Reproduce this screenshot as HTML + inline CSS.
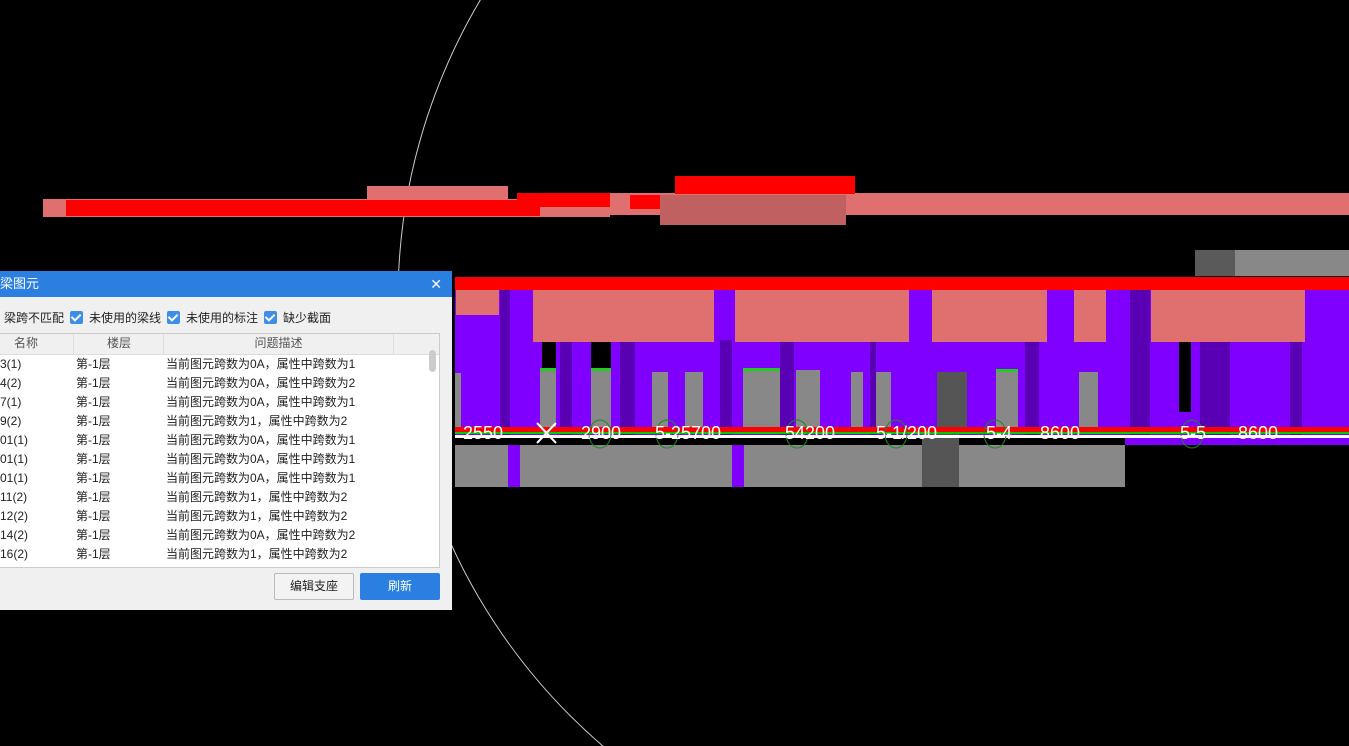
<!DOCTYPE html><html><head><meta charset="utf-8"><style>
html,body{margin:0;width:1349px;height:746px;overflow:hidden}
body{background:#000;position:relative;font-family:"Liberation Sans","Noto Sans CJK SC",sans-serif}
.r{position:absolute}
.dlg{position:absolute;left:0;top:271px;width:452px;height:339px;background:#f0f0f0;font-size:12px;color:#222}
.tb{height:26px;background:#2b7fe0;color:#fff;font-size:13px;line-height:26px}
.cb{display:inline-block;width:13px;height:13px;background:#3d8ee8;border-radius:2px;vertical-align:-2px;margin:0 6px 0 6px;position:relative}
.cb:after{content:"";position:absolute;left:3px;top:1px;width:4px;height:7px;border:solid #fff;border-width:0 2px 2px 0;transform:rotate(45deg)}
.tbl{position:absolute;left:0;top:62px;width:439px;height:233px;background:#fff;border:1px solid #ccc;border-left:none;overflow:hidden}
.row{height:19px;line-height:19px;position:relative}
.row span{position:absolute}
.btn{position:absolute;top:302px;height:25px;line-height:25px;text-align:center;border-radius:2px;font-size:12px}
.lb{position:absolute;top:423px;color:#fff;font-size:18px}
</style></head><body>
<svg class="r" style="left:0;top:0" width="1349" height="746"><circle cx="986" cy="300" r="588" fill="none" stroke="#ccc" stroke-width="1"/></svg>
<!-- upper band -->
<div class="r" style="left:43px;top:199px;width:500px;height:18px;background:#e07070"></div>
<div class="r" style="left:66px;top:200px;width:474px;height:16px;background:#f00"></div>
<div class="r" style="left:367px;top:186px;width:141px;height:14px;background:#e07070"></div>
<div class="r" style="left:517px;top:193px;width:95px;height:14px;background:#f00"></div>
<div class="r" style="left:540px;top:207px;width:70px;height:10px;background:#e07070"></div>
<div class="r" style="left:610px;top:193px;width:739px;height:22px;background:#e07070"></div>
<div class="r" style="left:630px;top:195px;width:30px;height:14px;background:#f00"></div>
<div class="r" style="left:675px;top:176px;width:180px;height:18px;background:#f00"></div>
<div class="r" style="left:660px;top:195px;width:186px;height:30px;background:#c06060"></div>
<!-- gray top right -->
<div class="r" style="left:1195px;top:250px;width:154px;height:26px;background:#888"></div>
<div class="r" style="left:1195px;top:250px;width:40px;height:26px;background:#5a5a5a"></div>
<!-- lower structure -->
<svg class="r" style="left:0;top:0" width="1349" height="746">
<rect x="455" y="277" width="894" height="14" fill="#f00"/>
<rect x="455" y="290" width="894" height="147" fill="#8000ff"/>
<g fill="#5a00b4"><rect x="500" y="290" width="10" height="147"/><rect x="560" y="340" width="12" height="97"/><rect x="620" y="340" width="15" height="97"/><rect x="720" y="340" width="12" height="97"/><rect x="780" y="340" width="14" height="97"/><rect x="870" y="340" width="6" height="97"/><rect x="1025" y="340" width="14" height="97"/><rect x="1130" y="290" width="20" height="147"/><rect x="1200" y="340" width="30" height="97"/><rect x="1290" y="340" width="12" height="97"/></g>
<g fill="#e07070"><rect x="456" y="290" width="43" height="25"/><rect x="533" y="290" width="181" height="52"/><rect x="735" y="290" width="174" height="52"/><rect x="932" y="290" width="115" height="52"/><rect x="1074" y="290" width="32" height="52"/><rect x="1151" y="290" width="154" height="52"/></g>
<g fill="#000"><rect x="542" y="342" width="14" height="28"/><rect x="591" y="342" width="20" height="28"/><rect x="1179" y="342" width="12" height="70"/></g>
<g fill="#888"><rect x="455" y="373" width="6" height="60"/><rect x="540" y="370" width="16" height="63"/><rect x="591" y="370" width="20" height="63"/><rect x="652" y="372" width="16" height="61"/><rect x="685" y="372" width="18" height="61"/><rect x="743" y="370" width="37" height="63"/><rect x="796" y="370" width="24" height="63"/><rect x="851" y="372" width="12" height="61"/><rect x="876" y="372" width="15" height="61"/><rect x="996" y="372" width="22" height="61"/><rect x="1079" y="372" width="19" height="61"/></g>
<rect x="937" y="372" width="30" height="61" fill="#555"/>
<g fill="#22cc22"><rect x="540" y="368" width="16" height="3"/><rect x="591" y="368" width="20" height="3"/><rect x="743" y="368" width="37" height="3"/><rect x="996" y="369" width="22" height="3"/></g>
<rect x="455" y="445" width="670" height="42" fill="#888"/>
<rect x="508" y="445" width="12" height="42" fill="#8000ff"/>
<rect x="732" y="445" width="12" height="42" fill="#8000ff"/>
<rect x="922" y="433" width="37" height="54" fill="#555"/>
<rect x="1125" y="437" width="224" height="8" fill="#8000ff"/>
<rect x="455" y="427" width="894" height="5" fill="#f00"/>
<rect x="455" y="432" width="894" height="2" fill="#0c0"/>
<rect x="455" y="435" width="894" height="3" fill="#fff"/>
<g fill="none" stroke="#1a8a1a" stroke-width="1"><ellipse cx="600" cy="434" rx="11" ry="14"/><ellipse cx="667" cy="434" rx="11" ry="14"/><ellipse cx="797" cy="434" rx="11" ry="14"/><ellipse cx="896" cy="434" rx="11" ry="14"/><ellipse cx="995" cy="434" rx="11" ry="14"/><ellipse cx="1192" cy="434" rx="11" ry="14"/></g>
<path d="M537 423 L556 443 M556 423 L537 443" stroke="#fff" stroke-width="2"/>
</svg>
<span class="lb" style="left:463px">2550</span>
<span class="lb" style="left:581px">2900</span>
<span class="lb" style="left:655px">5-25700</span>
<span class="lb" style="left:785px">54200</span>
<span class="lb" style="left:876px">5-1/200</span>
<span class="lb" style="left:986px">5-4</span>
<span class="lb" style="left:1040px">8600</span>
<span class="lb" style="left:1180px">5-5</span>
<span class="lb" style="left:1238px">8600</span>
<!-- dialog -->
<div class="dlg">
<div class="tb">梁图元<span style="position:absolute;right:10px;font-size:14px">✕</span></div>
<div style="position:absolute;top:38px;left:4px;font-size:12px">梁跨不匹配<span class="cb"></span>未使用的梁线<span class="cb"></span>未使用的标注<span class="cb"></span>缺少截面</div>
<div class="tbl">
<div class="row" style="background:#f0f0f0;height:20px;color:#555;border-bottom:1px solid #ddd"><span style="left:14px">名称</span><span style="left:73px;top:0;height:20px;border-left:1px solid #ddd;width:90px;text-align:center">楼层</span><span style="left:163px;height:20px;border-left:1px solid #ddd;border-right:1px solid #ddd;width:229px;text-align:center">问题描述</span></div>
<div class="row"><span style="left:0">3(1)</span><span style="left:76px">第-1层</span><span style="left:166px">当前图元跨数为0A，属性中跨数为1</span></div>
<div class="row"><span style="left:0">4(2)</span><span style="left:76px">第-1层</span><span style="left:166px">当前图元跨数为0A，属性中跨数为2</span></div>
<div class="row"><span style="left:0">7(1)</span><span style="left:76px">第-1层</span><span style="left:166px">当前图元跨数为0A，属性中跨数为1</span></div>
<div class="row"><span style="left:0">9(2)</span><span style="left:76px">第-1层</span><span style="left:166px">当前图元跨数为1，属性中跨数为2</span></div>
<div class="row"><span style="left:0">01(1)</span><span style="left:76px">第-1层</span><span style="left:166px">当前图元跨数为0A，属性中跨数为1</span></div>
<div class="row"><span style="left:0">01(1)</span><span style="left:76px">第-1层</span><span style="left:166px">当前图元跨数为0A，属性中跨数为1</span></div>
<div class="row"><span style="left:0">01(1)</span><span style="left:76px">第-1层</span><span style="left:166px">当前图元跨数为0A，属性中跨数为1</span></div>
<div class="row"><span style="left:0">11(2)</span><span style="left:76px">第-1层</span><span style="left:166px">当前图元跨数为1，属性中跨数为2</span></div>
<div class="row"><span style="left:0">12(2)</span><span style="left:76px">第-1层</span><span style="left:166px">当前图元跨数为1，属性中跨数为2</span></div>
<div class="row"><span style="left:0">14(2)</span><span style="left:76px">第-1层</span><span style="left:166px">当前图元跨数为0A，属性中跨数为2</span></div>
<div class="row"><span style="left:0">16(2)</span><span style="left:76px">第-1层</span><span style="left:166px">当前图元跨数为1，属性中跨数为2</span></div>
<div style="position:absolute;right:3px;top:16px;width:7px;height:22px;background:#ccc;border-radius:4px"></div>
</div>
<div class="btn" style="left:274px;width:78px;border:1px solid #bbb;background:#f3f3f3">编辑支座</div>
<div class="btn" style="left:360px;width:80px;background:#2b7fe0;color:#fff;height:27px;line-height:27px">刷新</div>
</div>
</body></html>
